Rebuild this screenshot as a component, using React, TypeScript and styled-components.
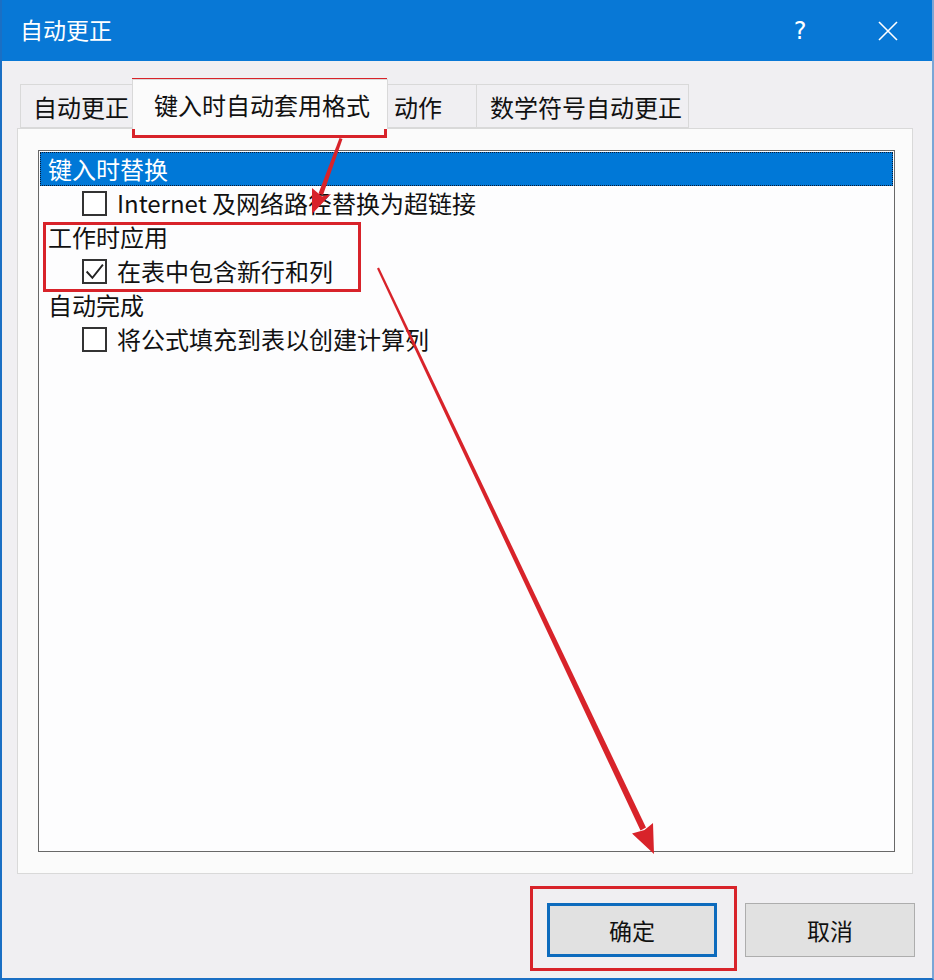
import React from "react";
import styled, { createGlobalStyle } from "styled-components";

const Global = createGlobalStyle`
  html, body { margin: 0; padding: 0; background: #ffffff; }
  * { box-sizing: border-box; }
`;

const FONT = `"Noto Sans CJK SC", "Noto Sans", "Liberation Sans", sans-serif`;

const Page = styled.div`
  position: relative;
  width: 934px;
  height: 980px;
  font-family: ${FONT};
`;

const Window = styled.div`
  width: 934px;
  height: 980px;
  display: flex;
  flex-direction: column;
  background: #f0eff2;
  border-left: 2px solid #1a6fc4;
  border-right: 2px solid #7aa6d6;
  border-bottom: 2px solid #1a6fc4;
`;

const TitleBar = styled.div`
  height: 61px;
  flex: none;
  background: #0878d6;
  display: flex;
  align-items: center;
  padding: 0 0 0 18px;
  color: #ffffff;
`;

const Title = styled.div`
  font-size: 23px;
  flex: 1;
  line-height: 1;
  margin-top: -2px;
`;

const TitleButton = styled.div`
  width: 88px;
  height: 61px;
  display: flex;
  align-items: center;
  justify-content: center;
  font-family: "DejaVu Sans", sans-serif;
  font-size: 24px;
  color: #ffffff;
`;

const TabStrip = styled.div`
  flex: none;
  height: 49px;
  margin-top: 18px;
  padding-left: 18px;
  display: flex;
  align-items: flex-end;
`;

const Tab = styled.div<{ $w: number; $pl: number; $active?: boolean }>`
  position: relative;
  width: ${(p) => p.$w}px;
  height: ${(p) => (p.$active ? 50 : 44)}px;
  margin-bottom: ${(p) => (p.$active ? -1 : 0)}px;
  z-index: ${(p) => (p.$active ? 2 : 1)};
  padding-left: ${(p) => p.$pl}px;
  display: flex;
  align-items: center;
  white-space: nowrap;
  overflow: hidden;
  font-size: 24px;
  color: #111;
  background: ${(p) => (p.$active ? "#fbfbfb" : "#f0eff2")};
  border: 1px solid #d9d9d9;
  border-bottom: ${(p) => (p.$active ? "none" : "1px solid #d9d9d9")};
  & + & { margin-left: -1px; }
`;

const Panel = styled.div`
  flex: none;
  height: 746px;
  margin: 0 19px 0 15px;
  background: #fbfbfb;
  border: 1px solid #d9d9d9;
  padding: 21px 17px 21px 20px;
  display: flex;
  flex-direction: column;
`;

const ListBox = styled.div`
  flex: 1;
  border: 1px solid #686868;
  background: #fdfdfe;
  padding: 1px;
  display: flex;
  flex-direction: column;
`;

const GroupRow = styled.div<{ $selected?: boolean }>`
  height: 34px;
  display: flex;
  align-items: center;
  padding-left: 7px;
  font-size: 24px;
  line-height: 1;
  color: ${(p) => (p.$selected ? "#ffffff" : "#111")};
  background: ${(p) => (p.$selected ? "#0078d7" : "transparent")};
  border: 1px ${(p) => (p.$selected ? "dotted #0b1a33" : "solid transparent")};
`;

const OptionRow = styled.div`
  height: 34px;
  display: flex;
  align-items: center;
  padding-left: 42px;
  gap: 10px;
  font-size: 24px;
  line-height: 1;
  color: #111;
`;

const Box = styled.div`
  width: 25px;
  height: 25px;
  flex: none;
  border: 2px solid #333;
  background: #ffffff;
  display: flex;
  align-items: center;
  justify-content: center;
`;

const ButtonRow = styled.div`
  flex: none;
  display: flex;
  justify-content: flex-end;
  gap: 28px;
  margin-top: 29px;
  padding-right: 17px;
`;

const Button = styled.div<{ $default?: boolean }>`
  width: 170px;
  height: 54px;
  display: flex;
  align-items: center;
  justify-content: center;
  font-size: 23px;
  color: #111;
  background: #e1e1e1;
  border: ${(p) => (p.$default ? "3px solid #0d6bbd" : "1px solid #adadad")};
`;

const Overlay = styled.svg`
  position: absolute;
  left: 0;
  top: 0;
  pointer-events: none;
`;

const Checkbox = ({ checked }: { checked?: boolean }) => (
  <Box>
    {checked && (
      <svg width="21" height="21" viewBox="0 0 20 20">
        <polyline points="2.5,10 8,16 18,3.5" fill="none" stroke="#222" strokeWidth="1.8" />
      </svg>
    )}
  </Box>
);

const RED = "#d8232a";

export default function App() {
  return (
    <Page>
      <Global />
      <Window>
        <TitleBar>
          <Title>自动更正</Title>
          <TitleButton>?</TitleButton>
          <TitleButton>
            <svg width="22" height="22" viewBox="0 0 22 22">
              <path d="M2 2 L20 20 M20 2 L2 20" stroke="#fff" strokeWidth="1.6" />
            </svg>
          </TitleButton>
        </TitleBar>
        <TabStrip>
          <Tab $w={113} $pl={12}>自动更正</Tab>
          <Tab $w={256} $pl={21} $active>键入时自动套用格式</Tab>
          <Tab $w={90} $pl={6}>动作</Tab>
          <Tab $w={213} $pl={13}>数学符号自动更正</Tab>
        </TabStrip>
        <Panel>
          <ListBox>
            <GroupRow $selected>键入时替换</GroupRow>
            <OptionRow>
              <Checkbox />
              <span>Internet 及网络路径替换为超链接</span>
            </OptionRow>
            <GroupRow>工作时应用</GroupRow>
            <OptionRow>
              <Checkbox checked />
              <span>在表中包含新行和列</span>
            </OptionRow>
            <GroupRow>自动完成</GroupRow>
            <OptionRow>
              <Checkbox />
              <span>将公式填充到表以创建计算列</span>
            </OptionRow>
          </ListBox>
        </Panel>
        <ButtonRow>
          <Button $default>确定</Button>
          <Button>取消</Button>
        </ButtonRow>
      </Window>
      <Overlay width="934" height="980" viewBox="0 0 934 980">
        <rect x="133.5" y="79.5" width="252" height="57" fill="none" stroke={RED} strokeWidth="3" />
        <rect x="44.5" y="223.5" width="315" height="67" fill="none" stroke={RED} strokeWidth="3" />
        <rect x="531.5" y="887.5" width="204" height="82" fill="none" stroke={RED} strokeWidth="3" />
        <polygon points="339.5,138 342.5,139 323,195 318.5,193.5" fill={RED} />
        <polygon points="312,214 331,194 322,196.5 312,188" fill={RED} />
        <polygon points="377,268.5 379,267.5 646,827.5 640.5,830.5" fill={RED} />
        <polygon points="654,854 653,823 644.5,830 632,833.5" fill={RED} />
      </Overlay>
    </Page>
  );
}
